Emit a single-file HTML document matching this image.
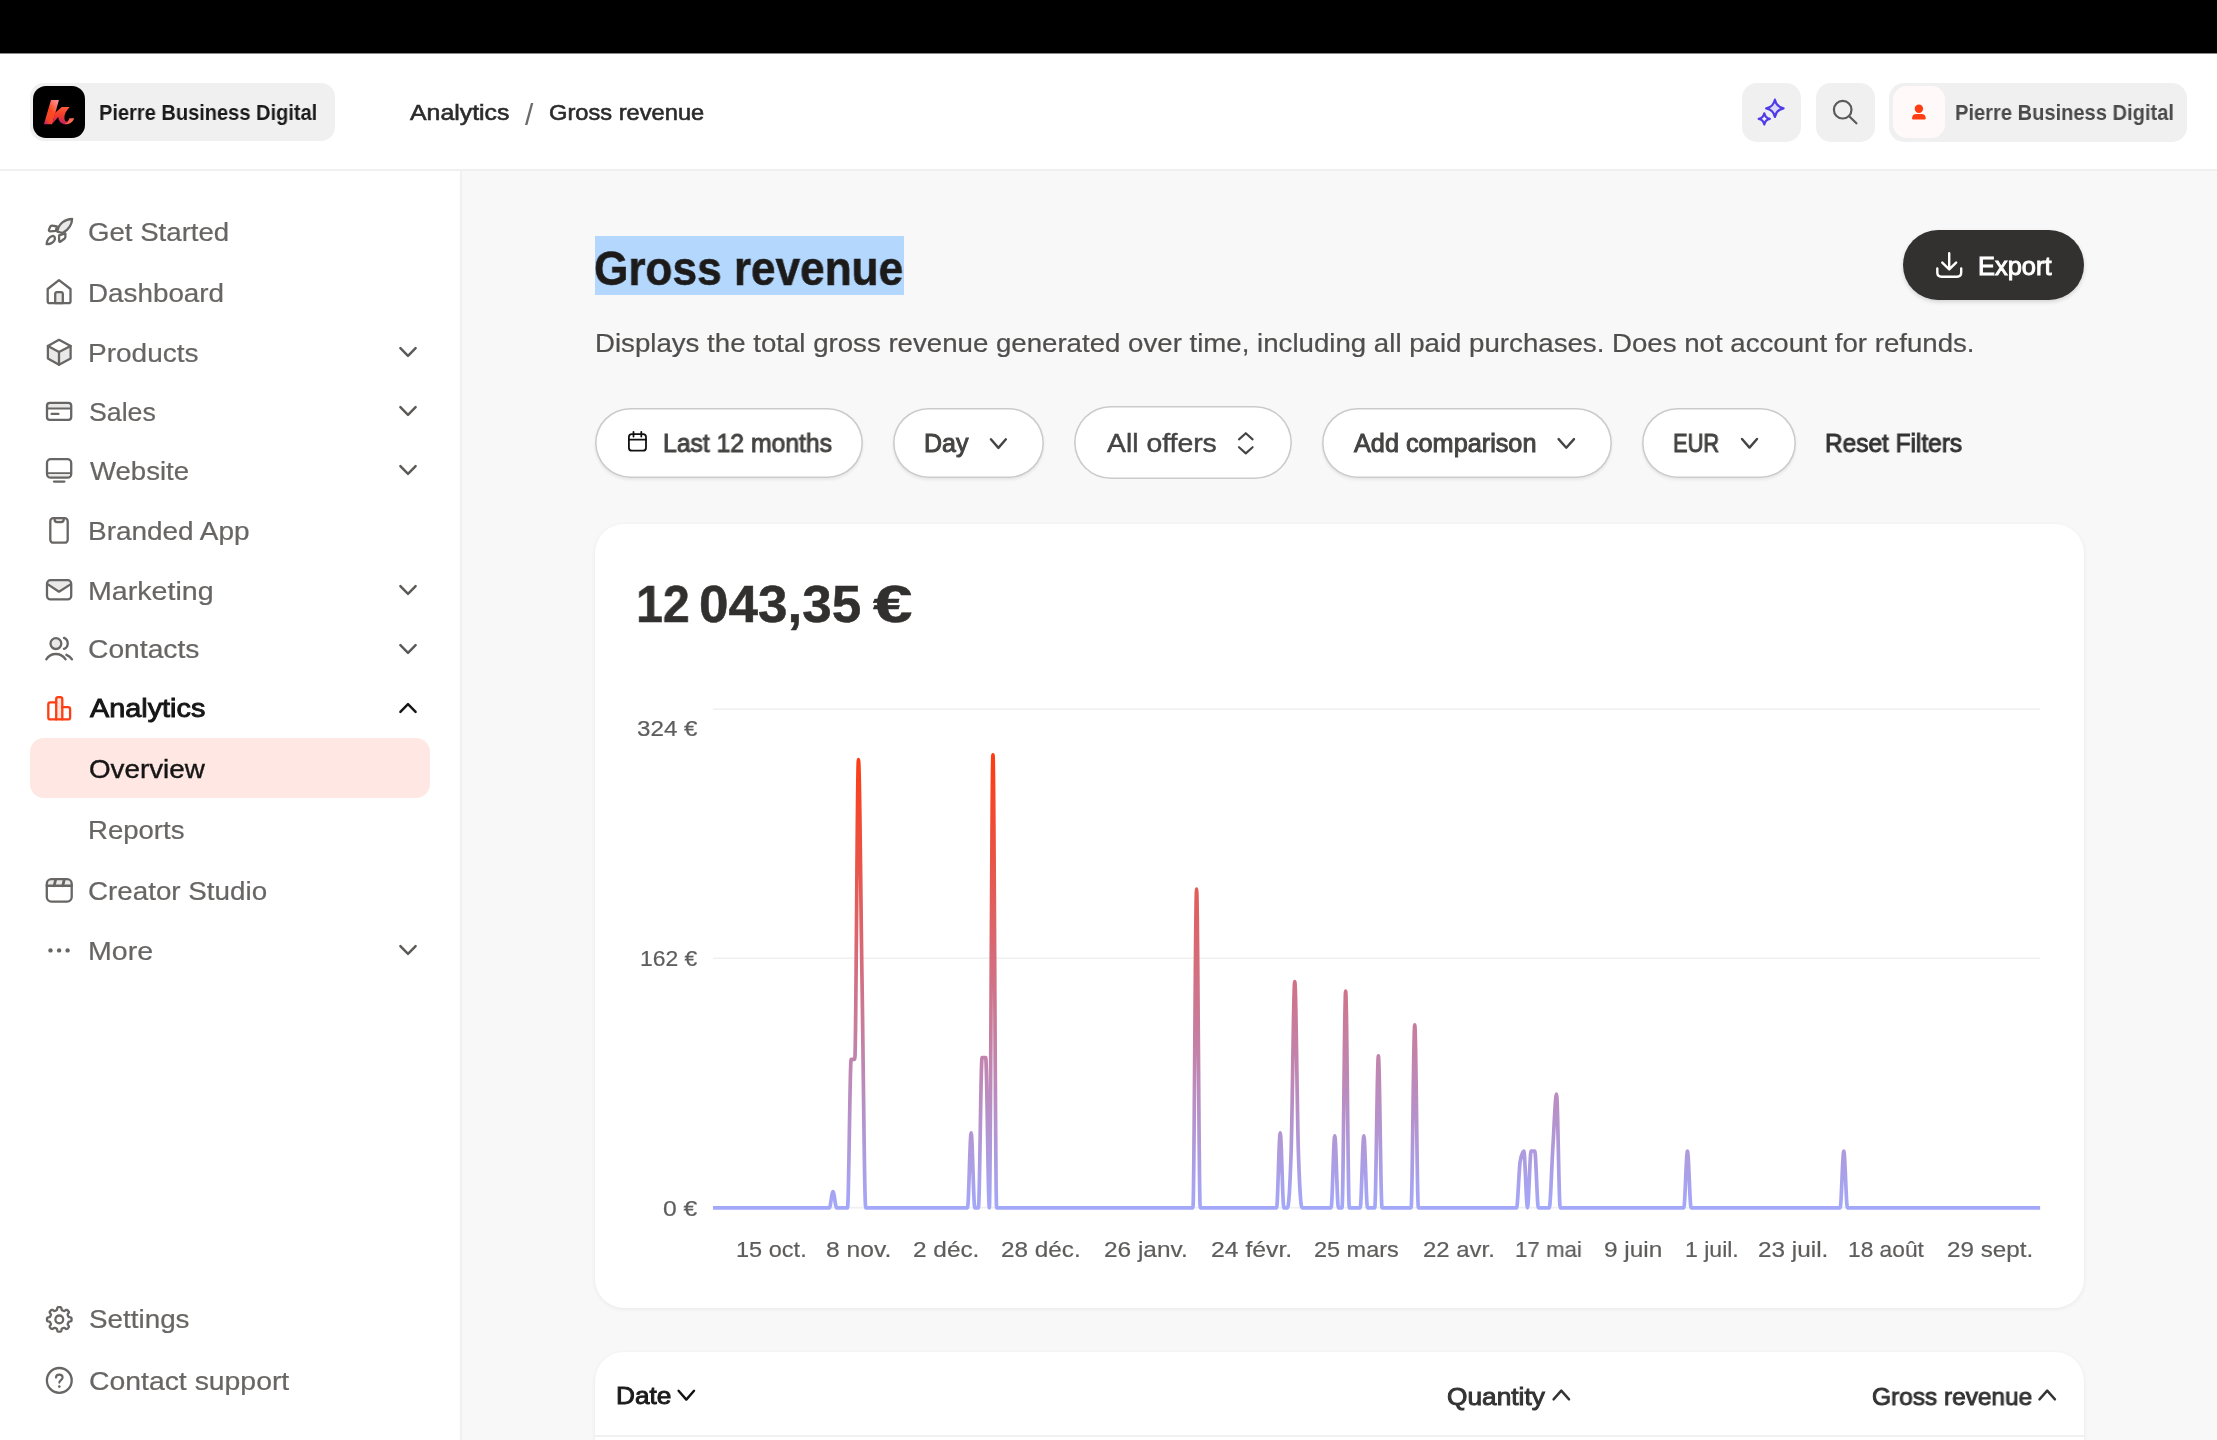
<!DOCTYPE html>
<html lang="en">
<head>
<meta charset="utf-8">
<title>Gross revenue</title>
<style>
*{box-sizing:border-box;margin:0;padding:0}
html,body{width:2217px;height:1440px;overflow:hidden;background:#f8f8f8}
body{font-family:"Liberation Sans",sans-serif;position:relative;color:#1a1a1a}
.abs{position:absolute}
.t{position:absolute;white-space:nowrap;line-height:1;will-change:transform}
#topbar{left:0;top:0;width:2217px;height:53px;background:#000}
#header{left:0;top:53px;width:2217px;height:118px;background:#fff;border-bottom:2px solid #f0f0f0}
#sidebar{left:0;top:171px;width:462px;height:1269px;background:#fff;border-right:2px solid #f0f0f0}
.pill{position:absolute;background:#f0f0f0;border-radius:14px}
.fbtn{position:absolute;background:#fff;border-radius:40px;box-shadow:inset 0 0 0 1.6px #cbcbcb,0 2px 3px rgba(0,0,0,.07)}
.card{position:absolute;background:#fff;border-radius:29px;box-shadow:0 1px 4px rgba(0,0,0,.07)}
</style>
</head>
<body>
<div id="topbar" class="abs"></div><div class="abs" style="left:0;top:53px;width:2217px;height:1px;background:#8a8a8a;z-index:2"></div>
<div id="header" class="abs"></div>
<div id="sidebar" class="abs"></div>

<!-- header left -->
<div class="pill" style="left:30px;top:83px;width:305px;height:58px"></div>
<div class="abs" style="left:33px;top:86px;width:52px;height:52px;background:#000;border-radius:13px"></div>
<svg class="abs" style="left:33px;top:86px;width:52px;height:52px" viewBox="0 0 52 52"><defs><linearGradient id="kg" x1="0.85" y1="0" x2="0.1" y2="1"><stop offset="0" stop-color="#ff8f98"/><stop offset="0.45" stop-color="#ff4a1f"/><stop offset="0.82" stop-color="#f4432a"/><stop offset="1" stop-color="#c21d72"/></linearGradient><linearGradient id="kg2" x1="0.5" y1="0" x2="0.4" y2="1"><stop offset="0" stop-color="#ff5a36"/><stop offset="0.5" stop-color="#f03a2a"/><stop offset="1" stop-color="#c01d70"/></linearGradient><linearGradient id="kg3" x1="0" y1="0" x2="1" y2="0.3"><stop offset="0" stop-color="#ff4a1f"/><stop offset="1" stop-color="#ff7468"/></linearGradient></defs><path d="M18 14.1H25.9L19.2 38.2H10.9Z" fill="url(#kg)"/><path d="M21.4 27.4L28.8 20.9H36.8C33.2 24.4 31 28.4 31.4 32.4C31.8 35.6 33.4 36.4 35 34.6L33.2 38.2C28.4 38.4 25.6 35.2 25.2 31L19.6 37.4Z" fill="url(#kg2)"/><path d="M36.4 32.3H41.2C39.8 36 37.2 38.2 33.2 38.2H31C33.4 37.6 35.2 35.4 36.4 32.3Z" fill="url(#kg3)"/></svg>

<!-- header right -->
<div class="pill" style="left:1742px;top:83px;width:59px;height:59px;border-radius:15px"></div>
<div class="pill" style="left:1816px;top:83px;width:59px;height:59px;border-radius:15px"></div>
<div class="pill" style="left:1889px;top:83px;width:298px;height:59px;border-radius:15px"></div>
<div class="abs" style="left:1893px;top:86px;width:52px;height:52px;background:#fffaf9;border-radius:14px"></div>
<svg class="abs" style="left:0;top:0;width:2217px;height:170px" viewBox="0 0 2217 170" fill="none" stroke-linecap="round" stroke-linejoin="round"><path d="M1774.9 99.6Q1776.2920000000001 106.908 1783.6000000000001 108.3Q1776.2920000000001 109.692 1774.9 117.0Q1773.508 109.692 1766.2 108.3Q1773.508 106.908 1774.9 99.6Z" stroke="#4f3ce8" stroke-width="2.2" fill="#dcd8f6"/><path d="M1764.3 113.30000000000001Q1765.196 118.004 1769.8999999999999 118.9Q1765.196 119.796 1764.3 124.5Q1763.404 119.796 1758.7 118.9Q1763.404 118.004 1764.3 113.30000000000001Z" stroke="#4f3ce8" stroke-width="2.2" fill="#f0f0f0"/><circle cx="1842.7" cy="109.7" r="8.8" stroke="#5c5b5a" stroke-width="2.2"/><path d="M1849.2 116.3L1856.4 123.3" stroke="#5c5b5a" stroke-width="2.3"/><circle cx="1918.9" cy="108.7" r="4.2" fill="#ff3d12"/><path d="M1912.1 118.2Q1912.1 113.9 1916.4 113.9H1921.4Q1925.7 113.9 1925.7 118.2Q1925.7 119.5 1924.4 119.5H1913.4Q1912.1 119.5 1912.1 118.2Z" fill="#ff3d12"/></svg>

<!-- sidebar -->
<div class="abs" style="left:30px;top:738px;width:400px;height:60px;background:#ffe8e4;border-radius:14px"></div>
<svg class="abs" style="left:396px;top:340px;width:24px;height:24px" viewBox="0 0 24 24" fill="none" stroke="#5c5a58" stroke-width="2.5" stroke-linecap="round" stroke-linejoin="round"><path d="M4.4 8.2L12 15.8L19.6 8.2"/></svg>
<svg class="abs" style="left:396px;top:399px;width:24px;height:24px" viewBox="0 0 24 24" fill="none" stroke="#5c5a58" stroke-width="2.5" stroke-linecap="round" stroke-linejoin="round"><path d="M4.4 8.2L12 15.8L19.6 8.2"/></svg>
<svg class="abs" style="left:396px;top:458px;width:24px;height:24px" viewBox="0 0 24 24" fill="none" stroke="#5c5a58" stroke-width="2.5" stroke-linecap="round" stroke-linejoin="round"><path d="M4.4 8.2L12 15.8L19.6 8.2"/></svg>
<svg class="abs" style="left:396px;top:578px;width:24px;height:24px" viewBox="0 0 24 24" fill="none" stroke="#5c5a58" stroke-width="2.5" stroke-linecap="round" stroke-linejoin="round"><path d="M4.4 8.2L12 15.8L19.6 8.2"/></svg>
<svg class="abs" style="left:396px;top:637px;width:24px;height:24px" viewBox="0 0 24 24" fill="none" stroke="#5c5a58" stroke-width="2.5" stroke-linecap="round" stroke-linejoin="round"><path d="M4.4 8.2L12 15.8L19.6 8.2"/></svg>
<svg class="abs" style="left:396px;top:696px;width:24px;height:24px" viewBox="0 0 24 24" fill="none" stroke="#161616" stroke-width="2.5" stroke-linecap="round" stroke-linejoin="round"><path d="M4.4 15.8L12 8.2L19.6 15.8"/></svg>
<svg class="abs" style="left:396px;top:938px;width:24px;height:24px" viewBox="0 0 24 24" fill="none" stroke="#5c5a58" stroke-width="2.5" stroke-linecap="round" stroke-linejoin="round"><path d="M4.4 8.2L12 15.8L19.6 8.2"/></svg>
<svg class="abs" style="left:0;top:170px;width:461px;height:1270px" viewBox="0 170 461 1270"><g transform="translate(39,212)" fill="none" stroke="#686664" stroke-width="2.3" stroke-linecap="round" stroke-linejoin="round"><path d="M17.9 14.5L13.2 13.7Q11.8 13.5 11.2 14.8L10 17.6Q9.5 19.3 11.3 19.3L16.8 18.9Z"/><path d="M20.1 23.4V28.8Q20.2 30.4 21.6 29.5L25.4 26.8Q26.4 26 26.4 24.8L26.3 21.4Z"/><path d="M33.1 6.9C26.5 7.2 19.6 11.2 18.3 19.6L23.6 21C29.5 17.6 33 12.5 33.1 6.9Z" fill="#e9e9e9"/><path d="M7.6 32.2C7.8 28 10.5 24.2 14 23.8C16.4 24.2 16.3 27 15 29C13.2 31.4 10.4 32.2 7.6 32.2Z"/></g><g transform="translate(39,272)" fill="none" stroke="#686664" stroke-width="2.3" stroke-linecap="round" stroke-linejoin="round"><path d="M16.2 31.2V22Q16.2 20.2 18 20.2H22Q23.8 20.2 23.8 22V31.2Z" fill="#e9e9e9"/><path d="M8.7 17L20 8.2L31.5 17V29.2Q31.5 31.2 29.5 31.2H10.7Q8.7 31.2 8.7 29.2Z"/></g><g transform="translate(39,332)" fill="none" stroke="#686664" stroke-width="2.3" stroke-linecap="round" stroke-linejoin="round"><path d="M8.9 13.9L20 20L31.6 13.9V26.6L20 32.8L8.9 26.6Z" fill="#e9e9e9" stroke="none"/><path d="M20 7.8L31.6 13.9V26.6L20 32.8L8.9 26.6V13.9Z"/><path d="M8.9 13.9L20 20L31.6 13.9"/><path d="M20 20V32.8"/></g><g transform="translate(39,391)" fill="none" stroke="#686664" stroke-width="2.3" stroke-linecap="round" stroke-linejoin="round"><rect x="8" y="11.8" width="24.2" height="5.7" fill="#e9e9e9" stroke="none"/><rect x="8" y="11.8" width="24.2" height="17" rx="2.8"/><path d="M8 17.5H32.2" stroke-width="1.8"/><path d="M12.6 22.9H19.4"/></g><g transform="translate(39,450)" fill="none" stroke="#686664" stroke-width="2.3" stroke-linecap="round" stroke-linejoin="round"><path d="M8 23.2H32.2V24Q32.2 27.7 28.5 27.7H11.7Q8 27.7 8 24Z" fill="#e9e9e9" stroke="none"/><rect x="8" y="9.1" width="24.2" height="18.6" rx="3.8"/><path d="M8 23.2H32.2" stroke-width="1.8"/><path d="M15 31.6H25.4"/></g><g transform="translate(39,511)" fill="none" stroke="#686664" stroke-width="2.3" stroke-linecap="round" stroke-linejoin="round"><path d="M15.6 7.2V8.6Q15.6 11.1 18.1 11.1H22.2Q24.7 11.1 24.7 8.6V7.2" fill="#e9e9e9"/><rect x="11.3" y="7.2" width="17.4" height="24.5" rx="3"/></g><g transform="translate(39,570)" fill="none" stroke="#686664" stroke-width="2.3" stroke-linecap="round" stroke-linejoin="round"><path d="M8.6 13.6Q8.6 10.4 11.5 10.4H28.7Q31.8 10.4 31.8 13.6L20 21.7Z" fill="#e9e9e9" stroke="none"/><rect x="8" y="10.2" width="24.2" height="19.2" rx="3.5"/><path d="M8.9 14.4L20 21.7L31.5 14.4"/></g><g transform="translate(39,629)" fill="none" stroke="#686664" stroke-width="2.3" stroke-linecap="round" stroke-linejoin="round"><circle cx="16.9" cy="14.6" r="5.4" fill="#e9e9e9"/><path d="M7.3 30.3C9.5 26.8 13 25 16.8 25C20.6 25 24.2 26.8 26.6 30.3"/><path d="M25 8.9C27.3 9.8 28.7 12 28.7 14.4C28.7 16.8 27.3 19 25 19.9"/><path d="M27.4 25.8C29.8 26.7 31.7 28.2 33 30.3"/></g><g transform="translate(39,688)" fill="none" stroke="#ff3d12" stroke-width="2.3" stroke-linecap="round" stroke-linejoin="round"><rect x="17.2" y="9.2" width="6.1" height="22.2" fill="#ffe3dd" stroke="none"/><path d="M9.3 29.4V16.4Q9.3 14.4 11.3 14.4H17.2V11.2Q17.2 9.2 19.2 9.2H21.3Q23.3 9.2 23.3 11.2V19.2H29.1Q31.1 19.2 31.1 21.2V29.4Q31.1 31.4 29.1 31.4H11.3Q9.3 31.4 9.3 29.4Z"/><path d="M17.2 14.4V31.4"/><path d="M23.3 19.2V31.4"/></g><g transform="translate(39,870)" fill="none" stroke="#686664" stroke-width="2.3" stroke-linecap="round" stroke-linejoin="round"><path d="M7.8 15.8V13.8Q7.8 9.2 12.4 9.2H28.1Q32.7 9.2 32.7 13.8V15.8Z" fill="#e9e9e9" stroke="none"/><rect x="7.8" y="9.2" width="24.9" height="22.4" rx="4.6"/><path d="M7.8 15.8H32.7" stroke-width="2.6"/><path d="M16.6 9.6L15.2 15.8" stroke-width="2.8"/><path d="M25.2 9.6L23.8 15.8" stroke-width="2.8"/></g><g transform="translate(39,930)" fill="none" stroke="#686664" stroke-width="2.3" stroke-linecap="round" stroke-linejoin="round"><circle cx="11.5" cy="20.4" r="2.2" fill="#686664" stroke="none"/><circle cx="20.1" cy="20.4" r="2.2" fill="#686664" stroke="none"/><circle cx="28.6" cy="20.4" r="2.2" fill="#686664" stroke="none"/></g><g transform="translate(39,1299.4)" fill="none" stroke="#686664" stroke-width="2.3" stroke-linecap="round" stroke-linejoin="round"><path d="M20.30 7.70L20.62 7.71L20.94 7.73L21.26 7.76L21.58 7.84L21.88 7.98L22.15 8.30L22.35 8.91L22.49 9.71L22.62 10.32L22.81 10.65L23.02 10.82L23.24 10.94L23.47 11.04L23.71 11.13L23.94 11.22L24.16 11.32L24.39 11.42L24.62 11.51L24.87 11.59L25.14 11.62L25.50 11.51L26.03 11.17L26.69 10.71L27.26 10.42L27.68 10.38L28.00 10.49L28.27 10.67L28.52 10.87L28.77 11.08L29.00 11.30L29.22 11.53L29.43 11.78L29.63 12.03L29.81 12.30L29.92 12.62L29.88 13.04L29.59 13.61L29.13 14.27L28.79 14.80L28.68 15.16L28.71 15.43L28.79 15.68L28.88 15.91L28.98 16.14L29.08 16.36L29.17 16.59L29.26 16.83L29.36 17.06L29.48 17.28L29.65 17.49L29.98 17.68L30.59 17.81L31.39 17.95L32.00 18.15L32.32 18.42L32.46 18.72L32.54 19.04L32.57 19.36L32.59 19.68L32.60 20.00L32.59 20.32L32.57 20.64L32.54 20.96L32.46 21.28L32.32 21.58L32.00 21.85L31.39 22.05L30.59 22.19L29.98 22.32L29.65 22.51L29.48 22.72L29.36 22.94L29.26 23.17L29.17 23.41L29.08 23.64L28.98 23.86L28.88 24.09L28.79 24.32L28.71 24.57L28.68 24.84L28.79 25.20L29.13 25.73L29.59 26.39L29.88 26.96L29.92 27.38L29.81 27.70L29.63 27.97L29.43 28.22L29.22 28.47L29.00 28.70L28.77 28.92L28.52 29.13L28.27 29.33L28.00 29.51L27.68 29.62L27.26 29.58L26.69 29.29L26.03 28.83L25.50 28.49L25.14 28.38L24.87 28.41L24.62 28.49L24.39 28.58L24.16 28.68L23.94 28.78L23.71 28.87L23.47 28.96L23.24 29.06L23.02 29.18L22.81 29.35L22.62 29.68L22.49 30.29L22.35 31.09L22.15 31.70L21.88 32.02L21.58 32.16L21.26 32.24L20.94 32.27L20.62 32.29L20.30 32.30L19.98 32.29L19.66 32.27L19.34 32.24L19.02 32.16L18.72 32.02L18.45 31.70L18.25 31.09L18.11 30.29L17.98 29.68L17.79 29.35L17.58 29.18L17.36 29.06L17.13 28.96L16.89 28.87L16.66 28.78L16.44 28.68L16.21 28.58L15.98 28.49L15.73 28.41L15.46 28.38L15.10 28.49L14.57 28.83L13.91 29.29L13.34 29.58L12.92 29.62L12.60 29.51L12.33 29.33L12.08 29.13L11.83 28.92L11.60 28.70L11.38 28.47L11.17 28.22L10.97 27.97L10.79 27.70L10.68 27.38L10.72 26.96L11.01 26.39L11.47 25.73L11.81 25.20L11.92 24.84L11.89 24.57L11.81 24.32L11.72 24.09L11.62 23.86L11.52 23.64L11.43 23.41L11.34 23.17L11.24 22.94L11.12 22.72L10.95 22.51L10.62 22.32L10.01 22.19L9.21 22.05L8.60 21.85L8.28 21.58L8.14 21.28L8.06 20.96L8.03 20.64L8.01 20.32L8.00 20.00L8.01 19.68L8.03 19.36L8.06 19.04L8.14 18.72L8.28 18.42L8.60 18.15L9.21 17.95L10.01 17.81L10.62 17.68L10.95 17.49L11.12 17.28L11.24 17.06L11.34 16.83L11.43 16.59L11.52 16.36L11.62 16.14L11.72 15.91L11.81 15.68L11.89 15.43L11.92 15.16L11.81 14.80L11.47 14.27L11.01 13.61L10.72 13.04L10.68 12.62L10.79 12.30L10.97 12.03L11.17 11.78L11.38 11.53L11.60 11.30L11.83 11.08L12.08 10.87L12.33 10.67L12.60 10.49L12.92 10.38L13.34 10.42L13.91 10.71L14.57 11.17L15.10 11.51L15.46 11.62L15.73 11.59L15.98 11.51L16.21 11.42L16.44 11.32L16.66 11.22L16.89 11.13L17.13 11.04L17.36 10.94L17.58 10.82L17.79 10.65L17.98 10.32L18.11 9.71L18.25 8.91L18.45 8.30L18.72 7.98L19.02 7.84L19.34 7.76L19.66 7.73L19.98 7.71Z" stroke-linejoin="round"/><circle cx="20.3" cy="20" r="3.9"/></g><g transform="translate(39,1360.4)" fill="none" stroke="#686664" stroke-width="2.3" stroke-linecap="round" stroke-linejoin="round"><circle cx="20.3" cy="20" r="12.4"/><path d="M17 17.2C17 13.2 23.6 13.2 23.6 17.2C23.6 19.6 20.3 19.8 20.3 22.2" stroke-width="2.1"/><circle cx="20.3" cy="26.2" r="1.3" fill="#686664" stroke="none"/></g></svg>

<!-- main -->
<div class="abs" style="left:595px;top:236px;width:309px;height:59px;background:#b4d7fe"></div>

<div class="abs" style="left:1903px;top:230px;width:181px;height:70px;background:#333130;border-radius:35px;box-shadow:0 2px 4px rgba(0,0,0,.15)"></div>

<!-- filters -->
<div class="fbtn" style="left:595px;top:408px;width:268px;height:70px"></div>
<div class="fbtn" style="left:893px;top:408px;width:151px;height:70px"></div>
<div class="fbtn" style="left:1074px;top:406px;width:218px;height:73px;box-shadow:inset 0 0 0 1.6px #cbcbcb"></div>
<div class="fbtn" style="left:1322px;top:408px;width:290px;height:70px"></div>
<div class="fbtn" style="left:1642px;top:408px;width:154px;height:70px"></div>
<svg class="abs" style="left:0;top:200px;width:2217px;height:300px" viewBox="0 200 2217 300" fill="none" stroke-linecap="round" stroke-linejoin="round"><path d="M1949.2 253.3V269.2M1942.3 262.6L1949.2 269.4L1956.1 262.6" stroke="#fff" stroke-width="2.4"/><path d="M1937.3 268.4V272.6Q1937.3 276.8 1941.5 276.8H1957Q1961.2 276.8 1961.2 272.6V268.4" stroke="#fff" stroke-width="2.4"/><rect x="628.9" y="434.1" width="17.1" height="16.6" rx="3" stroke="#111" stroke-width="1.8"/><path d="M628.9 439.6H646M633.5 431.8V436.6M641.3 431.8V436.6" stroke="#111" stroke-width="1.8"/><path d="M990.9 439.3L998.4 447.90000000000003L1005.9 439.3" stroke="#444" stroke-width="2.4"/><path d="M1558.6 439.09999999999997L1566.3 447.7L1574.0 439.09999999999997" stroke="#444" stroke-width="2.4"/><path d="M1742.0 439.0L1749.5 447.6L1757.0 439.0" stroke="#444" stroke-width="2.4"/><path d="M1239 439.4L1245.8 433.2L1252.6 439.4M1239 447.2L1245.8 453.4L1252.6 447.2" stroke="#444" stroke-width="2.1"/></svg>

<!-- chart card -->
<div class="card" style="left:595px;top:524px;width:1489px;height:784px"></div>
<svg class="abs" style="left:0;top:0;width:2217px;height:1440px;pointer-events:none;will-change:transform" viewBox="0 0 2217 1440">
<defs><linearGradient id="lg" gradientUnits="userSpaceOnUse" x1="0" y1="753" x2="0" y2="1209"><stop offset="0" stop-color="#ff3a10"/><stop offset="1" stop-color="#a3a8fa"/></linearGradient></defs>
<line x1="713" x2="2040" y1="709.3" y2="709.3" stroke="#f0f0f0" stroke-width="1.6"/>
<line x1="713" x2="2040" y1="958.2" y2="958.2" stroke="#f0f0f0" stroke-width="1.6"/>
<line x1="713" x2="2040" y1="1207.6" y2="1207.6" stroke="#f0f0f0" stroke-width="1.6"/>
<path d="M713.00,1207.80H829.35C830.56,1207.80,831.78,1191.60,832.99,1191.60C834.20,1191.60,835.41,1207.80,836.62,1207.80H847.53C848.74,1207.80,849.96,1059.30,851.17,1059.30H854.80C856.02,1059.30,857.23,759.60,858.44,759.60C859.65,759.60,860.86,909.70,862.08,984.40C863.29,1059.10,864.50,1207.80,865.71,1207.80H967.52C968.73,1207.80,969.94,1132.90,971.16,1132.90C972.37,1132.90,973.58,1207.80,974.79,1207.80H978.43C979.64,1207.80,980.85,1057.70,982.06,1057.70H985.70C986.91,1057.70,988.12,1207.80,989.34,1207.80C990.55,1207.80,991.76,754.90,992.97,754.90C994.18,754.90,995.40,1207.80,996.61,1207.80H1192.95C1194.16,1207.80,1195.38,889.00,1196.59,889.00C1197.80,889.00,1199.01,1207.80,1200.22,1207.80H1276.58C1277.79,1207.80,1279.00,1132.90,1280.22,1132.90C1281.43,1132.90,1282.64,1207.80,1283.85,1207.80H1287.49C1288.70,1207.80,1289.91,1189.33,1291.12,1152.40C1292.34,1115.47,1293.55,981.70,1294.76,981.70C1295.97,981.70,1297.18,1115.47,1298.40,1152.40C1299.61,1189.33,1300.82,1207.80,1302.03,1207.80H1331.12C1332.33,1207.80,1333.54,1135.90,1334.76,1135.90C1335.97,1135.90,1337.18,1207.80,1338.39,1207.80H1342.03C1343.24,1207.80,1344.45,991.20,1345.66,991.20C1346.88,991.20,1348.09,1207.80,1349.30,1207.80H1360.21C1361.42,1207.80,1362.63,1135.90,1363.84,1135.90C1365.06,1135.90,1366.27,1207.80,1367.48,1207.80H1374.75C1375.96,1207.80,1377.18,1055.90,1378.39,1055.90C1379.60,1055.90,1380.81,1207.80,1382.02,1207.80H1411.11C1412.32,1207.80,1413.54,1024.80,1414.75,1024.80C1415.96,1024.80,1417.17,1207.80,1418.38,1207.80H1516.56C1517.77,1207.80,1518.98,1168.20,1520.19,1161.40C1521.40,1154.60,1522.62,1151.20,1523.83,1151.20C1525.04,1151.20,1526.25,1207.80,1527.46,1207.80C1528.68,1207.80,1529.89,1151.20,1531.10,1151.20H1534.74C1535.95,1151.20,1537.16,1207.80,1538.37,1207.80H1549.28C1550.49,1207.80,1551.70,1165.37,1552.92,1146.40C1554.13,1127.43,1555.34,1094.00,1556.55,1094.00C1557.76,1094.00,1558.98,1207.80,1560.19,1207.80H1683.81C1685.02,1207.80,1686.24,1151.20,1687.45,1151.20C1688.66,1151.20,1689.87,1207.80,1691.08,1207.80H1840.16C1841.37,1207.80,1842.58,1151.20,1843.80,1151.20C1845.01,1151.20,1846.22,1207.80,1847.43,1207.80H2040.14" fill="none" stroke="url(#lg)" stroke-width="3.7" stroke-linejoin="round" stroke-linecap="butt"/>
</svg>

<!-- table card -->
<div class="card" style="left:595px;top:1352px;width:1489px;height:120px"></div>
<div class="abs" style="left:595px;top:1435px;width:1489px;height:2px;background:#f1f1f1"></div>
<div class="t" id="h_brand" style="left:99.31px;top:102px;font-size:21.7px;font-weight:700;color:#1a1a1a;transform-origin:0 0;transform:scaleX(0.9235);">Pierre Business Digital</div>
<div class="t" id="h_crumb1" style="left:410.07px;top:101px;font-size:22.8px;font-weight:400;color:#2b2b2b;transform-origin:0 0;transform:scaleX(1.0901);-webkit-text-stroke:0.6px #2b2b2b;">Analytics</div>
<div class="t" id="h_slash" style="left:524.9px;top:100px;font-size:29.5px;font-weight:400;color:#6a6a6a;transform-origin:0 0;transform:scaleX(1.0125);">/</div>
<div class="t" id="h_crumb2" style="left:548.62px;top:101px;font-size:22.8px;font-weight:400;color:#2b2b2b;transform-origin:0 0;transform:scaleX(1.0385);-webkit-text-stroke:0.6px #2b2b2b;">Gross revenue</div>
<div class="t" id="h_user" style="left:1954.71px;top:102px;font-size:21.7px;font-weight:700;color:#4a4a4a;transform-origin:0 0;transform:scaleX(0.9265);">Pierre Business Digital</div>
<div class="t" id="s_getstarted" style="left:88.45px;top:219px;font-size:26.5px;font-weight:400;color:#686664;transform-origin:0 0;transform:scaleX(1.0422);-webkit-text-stroke:0.22px #686664;">Get Started</div>
<div class="t" id="s_dashboard" style="left:88.15px;top:280px;font-size:26.5px;font-weight:400;color:#686664;transform-origin:0 0;transform:scaleX(1.0496);-webkit-text-stroke:0.22px #686664;">Dashboard</div>
<div class="t" id="s_products" style="left:88.49px;top:340px;font-size:26.5px;font-weight:400;color:#686664;transform-origin:0 0;transform:scaleX(1.0565);-webkit-text-stroke:0.22px #686664;">Products</div>
<div class="t" id="s_sales" style="left:88.74px;top:399px;font-size:26.5px;font-weight:400;color:#686664;transform-origin:0 0;transform:scaleX(1.0078);-webkit-text-stroke:0.22px #686664;">Sales</div>
<div class="t" id="s_website" style="left:89.75px;top:458px;font-size:26.5px;font-weight:400;color:#686664;transform-origin:0 0;transform:scaleX(1.0398);-webkit-text-stroke:0.22px #686664;">Website</div>
<div class="t" id="s_brandedapp" style="left:88.49px;top:518px;font-size:26.5px;font-weight:400;color:#686664;transform-origin:0 0;transform:scaleX(1.0542);-webkit-text-stroke:0.22px #686664;">Branded App</div>
<div class="t" id="s_marketing" style="left:88.44px;top:578px;font-size:26.5px;font-weight:400;color:#686664;transform-origin:0 0;transform:scaleX(1.0789);-webkit-text-stroke:0.22px #686664;">Marketing</div>
<div class="t" id="s_contacts" style="left:88.42px;top:636px;font-size:26.5px;font-weight:400;color:#686664;transform-origin:0 0;transform:scaleX(1.0659);-webkit-text-stroke:0.22px #686664;">Contacts</div>
<div class="t" id="s_analytics" style="left:90.29px;top:695px;font-size:26.5px;font-weight:400;color:#161616;transform-origin:0 0;transform:scaleX(1.0873);-webkit-text-stroke:0.95px #161616;">Analytics</div>
<div class="t" id="s_overview" style="left:88.65px;top:756px;font-size:26.5px;font-weight:400;color:#161616;transform-origin:0 0;transform:scaleX(1.0478);-webkit-text-stroke:0.4px #161616;">Overview</div>
<div class="t" id="s_reports" style="left:88.22px;top:817px;font-size:26.5px;font-weight:400;color:#686664;transform-origin:0 0;transform:scaleX(1.0389);-webkit-text-stroke:0.22px #686664;">Reports</div>
<div class="t" id="s_creatorstudio" style="left:88.39px;top:878px;font-size:26.5px;font-weight:400;color:#686664;transform-origin:0 0;transform:scaleX(1.0481);-webkit-text-stroke:0.22px #686664;">Creator Studio</div>
<div class="t" id="s_more" style="left:88.14px;top:938px;font-size:26.5px;font-weight:400;color:#686664;transform-origin:0 0;transform:scaleX(1.0777);-webkit-text-stroke:0.22px #686664;">More</div>
<div class="t" id="s_settings" style="left:88.59px;top:1306px;font-size:26.5px;font-weight:400;color:#686664;transform-origin:0 0;transform:scaleX(1.0496);-webkit-text-stroke:0.22px #686664;">Settings</div>
<div class="t" id="s_contactsupport" style="left:88.56px;top:1368px;font-size:26.5px;font-weight:400;color:#686664;transform-origin:0 0;transform:scaleX(1.0703);-webkit-text-stroke:0.22px #686664;">Contact support</div>
<div class="t" id="m_title" style="left:594.41px;top:244px;font-size:48.5px;font-weight:700;color:#1c1b1a;transform-origin:0 0;transform:scaleX(0.91);-webkit-text-stroke:0.6px #1c1b1a;">Gross revenue</div>
<div class="t" id="m_desc" style="left:594.51px;top:330px;font-size:26.5px;font-weight:400;color:#4f4e4d;transform-origin:0 0;transform:scaleX(1.0429);-webkit-text-stroke:0.22px #4f4e4d;">Displays the total gross revenue generated over time, including all paid purchases. Does not account for refunds.</div>
<div class="t" id="m_export" style="left:1978.47px;top:254px;font-size:25px;font-weight:400;color:#fff;transform-origin:0 0;transform:scaleX(1.0169);-webkit-text-stroke:0.95px #fff;">Export</div>
<div class="t" id="f_last" style="left:662.72px;top:431px;font-size:25px;font-weight:400;color:#454443;transform-origin:0 0;transform:scaleX(0.9888);-webkit-text-stroke:0.95px #454443;">Last 12 months</div>
<div class="t" id="f_day" style="left:923.5px;top:431px;font-size:25px;font-weight:400;color:#454443;transform-origin:0 0;transform:scaleX(0.9977);-webkit-text-stroke:0.95px #454443;">Day</div>
<div class="t" id="f_all" style="left:1106.57px;top:430px;font-size:26px;font-weight:400;color:#444;transform-origin:0 0;transform:scaleX(1.0903);-webkit-text-stroke:0.45px #444;">All offers</div>
<div class="t" id="f_add" style="left:1354.41px;top:431px;font-size:25px;font-weight:400;color:#454443;transform-origin:0 0;transform:scaleX(1.01);-webkit-text-stroke:0.95px #454443;">Add comparison</div>
<div class="t" id="f_eur" style="left:1673.19px;top:431px;font-size:25px;font-weight:400;color:#454443;transform-origin:0 0;transform:scaleX(0.8745);-webkit-text-stroke:0.95px #454443;">EUR</div>
<div class="t" id="f_reset" style="left:1825.03px;top:431px;font-size:25px;font-weight:400;color:#333;transform-origin:0 0;transform:scaleX(0.9772);-webkit-text-stroke:0.95px #333;">Reset Filters</div>
<div id="c_total" style="font-size:0"><div class="t" id="c_total_a" style="left:636.42px;top:578px;font-size:52.2px;font-weight:700;color:#32302f;transform-origin:0 0;transform:scaleX(0.9258);-webkit-text-stroke:0.5px #32302f;">12</div> <div class="t" id="c_total_b" style="left:699.22px;top:578px;font-size:52.2px;font-weight:700;color:#32302f;transform-origin:0 0;transform:scaleX(1.0169);-webkit-text-stroke:0.5px #32302f;">043,35</div> <div class="t" id="c_total_c" style="left:872.9px;top:578px;font-size:52.2px;font-weight:700;color:#32302f;transform-origin:0 0;transform:scaleX(1.3593);-webkit-text-stroke:0.5px #32302f;">€</div></div>
<div class="t" id="t_date" style="left:616.31px;top:1384px;font-size:24.7px;font-weight:400;color:#1a1a1a;transform-origin:0 0;transform:scaleX(1.06);-webkit-text-stroke:0.95px #1a1a1a;">Date</div>
<div class="t" id="t_qty" style="left:1447.3px;top:1385px;font-size:24.7px;font-weight:400;color:#333;transform-origin:0 0;transform:scaleX(1.0638);-webkit-text-stroke:0.95px #333;">Quantity</div>
<div class="t" id="t_gross" style="left:1871.96px;top:1385px;font-size:24.7px;font-weight:400;color:#333;transform-origin:0 0;transform:scaleX(0.9888);-webkit-text-stroke:0.95px #333;">Gross revenue</div>
<div class="t" id="ax_x0" style="left:735.84px;top:1239px;font-size:22.6px;font-weight:400;color:#5e5d5c;transform-origin:0 0;transform:scaleX(1.0419);-webkit-text-stroke:0.2px #5e5d5c;">15 oct.</div>
<div class="t" id="ax_x1" style="left:826.31px;top:1239px;font-size:22.6px;font-weight:400;color:#5e5d5c;transform-origin:0 0;transform:scaleX(1.0912);-webkit-text-stroke:0.2px #5e5d5c;">8 nov.</div>
<div class="t" id="ax_x2" style="left:913.12px;top:1239px;font-size:22.6px;font-weight:400;color:#5e5d5c;transform-origin:0 0;transform:scaleX(1.0786);-webkit-text-stroke:0.2px #5e5d5c;">2 déc.</div>
<div class="t" id="ax_x3" style="left:1000.62px;top:1239px;font-size:22.6px;font-weight:400;color:#5e5d5c;transform-origin:0 0;transform:scaleX(1.0765);-webkit-text-stroke:0.2px #5e5d5c;">28 déc.</div>
<div class="t" id="ax_x4" style="left:1104.12px;top:1239px;font-size:22.6px;font-weight:400;color:#5e5d5c;transform-origin:0 0;transform:scaleX(1.0805);-webkit-text-stroke:0.2px #5e5d5c;">26 janv.</div>
<div class="t" id="ax_x5" style="left:1210.91px;top:1239px;font-size:22.6px;font-weight:400;color:#5e5d5c;transform-origin:0 0;transform:scaleX(1.0947);-webkit-text-stroke:0.2px #5e5d5c;">24 févr.</div>
<div class="t" id="ax_x6" style="left:1314.16px;top:1239px;font-size:22.6px;font-weight:400;color:#5e5d5c;transform-origin:0 0;transform:scaleX(1.0387);-webkit-text-stroke:0.2px #5e5d5c;">25 mars</div>
<div class="t" id="ax_x7" style="left:1422.64px;top:1239px;font-size:22.6px;font-weight:400;color:#5e5d5c;transform-origin:0 0;transform:scaleX(1.0585);-webkit-text-stroke:0.2px #5e5d5c;">22 avr.</div>
<div class="t" id="ax_x8" style="left:1515.32px;top:1239px;font-size:22.6px;font-weight:400;color:#5e5d5c;transform-origin:0 0;transform:scaleX(0.9862);-webkit-text-stroke:0.2px #5e5d5c;">17 mai</div>
<div class="t" id="ax_x9" style="left:1603.52px;top:1239px;font-size:22.6px;font-weight:400;color:#5e5d5c;transform-origin:0 0;transform:scaleX(1.0802);-webkit-text-stroke:0.2px #5e5d5c;">9 juin</div>
<div class="t" id="ax_x10" style="left:1685.17px;top:1239px;font-size:22.6px;font-weight:400;color:#5e5d5c;transform-origin:0 0;transform:scaleX(1.0193);-webkit-text-stroke:0.2px #5e5d5c;">1 juil.</div>
<div class="t" id="ax_x11" style="left:1757.92px;top:1239px;font-size:22.6px;font-weight:400;color:#5e5d5c;transform-origin:0 0;transform:scaleX(1.0768);-webkit-text-stroke:0.2px #5e5d5c;">23 juil.</div>
<div class="t" id="ax_x12" style="left:1848.49px;top:1239px;font-size:22.6px;font-weight:400;color:#5e5d5c;transform-origin:0 0;transform:scaleX(1.0061);-webkit-text-stroke:0.2px #5e5d5c;">18 août</div>
<div class="t" id="ax_x13" style="left:1947.43px;top:1239px;font-size:22.6px;font-weight:400;color:#5e5d5c;transform-origin:0 0;transform:scaleX(1.071);-webkit-text-stroke:0.2px #5e5d5c;">29 sept.</div>
<div class="t" id="ax_y0" style="left:636.8px;top:718px;font-size:22.6px;font-weight:400;color:#5e5d5c;transform-origin:0 0;transform:scaleX(1.0703);-webkit-text-stroke:0.2px #5e5d5c;">324 €</div>
<div class="t" id="ax_y1" style="left:640.18px;top:948px;font-size:22.6px;font-weight:400;color:#5e5d5c;transform-origin:0 0;transform:scaleX(1.0137);-webkit-text-stroke:0.2px #5e5d5c;">162 €</div>
<div class="t" id="ax_y2" style="left:663.08px;top:1198px;font-size:22.6px;font-weight:400;color:#5e5d5c;transform-origin:0 0;transform:scaleX(1.0918);-webkit-text-stroke:0.2px #5e5d5c;">0 €</div>
<svg class="abs" style="left:0;top:1360px;width:2217px;height:80px" viewBox="0 1360 2217 80" fill="none" stroke-linecap="round" stroke-linejoin="round"><path d="M678.55 1390.8L686.3 1399.6000000000001L694.05 1390.8" stroke="#111" stroke-width="2.4"/><path d="M1553.55 1399.4L1561.3 1390.6L1569.05 1399.4" stroke="#333" stroke-width="2.4"/><path d="M2039.45 1399.4L2047.2 1390.6L2054.95 1399.4" stroke="#333" stroke-width="2.4"/></svg>
</body>
</html>
